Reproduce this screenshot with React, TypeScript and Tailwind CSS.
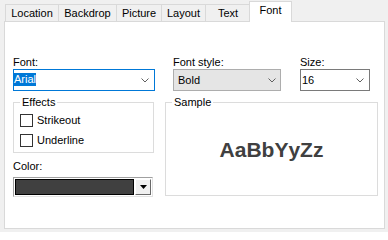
import React from "react";

const tabs = [
  { label: "Location", w: "w-[54px]" },
  { label: "Backdrop", w: "w-[59px]" },
  { label: "Picture", w: "w-[46px]" },
  { label: "Layout", w: "w-[45px]" },
  { label: "Text", w: "w-[46px]" },
];

function Chevron() {
  return (
    <svg width="8" height="5" viewBox="0 0 8 5" className="shrink-0">
      <path d="M0.5 0.5 L4 4 L7.5 0.5" fill="none" stroke="#606060" strokeWidth="1" />
    </svg>
  );
}

function Check({ label }: { label: string }) {
  return (
    <div className="flex items-center h-[13px]">
      <span className="w-[13px] h-[13px] border border-[#333333] bg-white" />
      <span className="ml-[4px] leading-[13px]">{label}</span>
    </div>
  );
}

export default function App() {
  return (
    <div
      className="w-[388px] h-[232px] bg-[#f0f0f0] px-[4px] text-[11px] text-black overflow-hidden"
      style={{ fontFamily: '"Liberation Sans", Arial, sans-serif' }}
    >
      {/* tab strip */}
      <div className="flex items-end h-[21px] pl-[1px]">
        {tabs.map((t, i) => (
          <div
            key={t.label}
            className={`${t.w} h-[17px] border border-b-0 border-[#d9d9d9] bg-[#f0f0f0] flex justify-center pt-[2px] leading-[13px] ${i > 0 ? "-ml-px" : ""}`}
          >
            {t.label}
          </div>
        ))}
        <div className="relative z-10 -ml-[2px] -mb-px w-[43px] h-[21px] border border-b-0 border-[#d9d9d9] bg-white flex justify-center pt-[2px] leading-[13px]">
          Font
        </div>
      </div>

      {/* page */}
      <div className="w-[381px] h-[208px] border border-[#d9d9d9] bg-white pl-[8px] pt-[34px]">
        <div className="flex">
          <div className="w-[142px]">
            <div className="h-[13px] leading-[13px]">Font:</div>
            <div className="h-[22px] border border-[#0078d7] bg-white flex items-center justify-between pr-[5px]">
              <span className="bg-[#0078d7] text-white h-[13px] leading-[13px] -mt-px">Arial</span>
              <Chevron />
            </div>
          </div>
          <div className="w-[108px] ml-[18px]">
            <div className="h-[13px] leading-[13px]">Font style:</div>
            <div className="h-[22px] border border-[#adadad] bg-[#e5e5e5] flex items-center justify-between pl-[4px] pr-[4px]">
              <span className="leading-[13px]">Bold</span>
              <Chevron />
            </div>
          </div>
          <div className="w-[70px] ml-[19px]">
            <div className="h-[13px] leading-[13px]">Size:</div>
            <div className="h-[22px] border border-[#7a7a7a] bg-white flex items-center justify-between pl-[1px] pr-[5px]">
              <span className="leading-[13px]">16</span>
              <Chevron />
            </div>
          </div>
        </div>

        <div className="flex mt-[5px]">
          <div className="w-[141px]">
            <fieldset className="h-[57px] border border-[#dcdcdc] pl-[6px]">
              <legend className="px-[2px] leading-[13px]">Effects</legend>
              <div className="mt-[5px] flex flex-col gap-[7px]">
                <Check label="Strikeout" />
                <Check label="Underline" />
              </div>
            </fieldset>
            <div className="mt-[7px] h-[13px] leading-[13px]">Color:</div>
            <div className="mt-[4px] w-[140px] h-[20px] border border-[#a0a0a0] border-r-[#e3e3e3] border-b-[#e3e3e3] bg-white p-px flex gap-px">
              <div className="flex-1 border border-black bg-[#404040]" />
              <div className="w-[16px] bg-[#f0f0f0] border border-t-white border-l-white border-r-[#696969] border-b-[#696969] flex items-center justify-center">
                <svg width="7" height="4" viewBox="0 0 7 4">
                  <path d="M0 0 H7 L3.5 4 Z" fill="#000" />
                </svg>
              </div>
            </div>
          </div>

          <fieldset className="ml-[11px] w-[213px] h-[100px] border border-[#dcdcdc] pl-[6px]">
            <legend className="px-[2px] leading-[13px]">Sample</legend>
            <div className="h-[86px] -ml-[6px] pb-[6px] flex items-center justify-center">
              <span className="text-[21px] font-bold text-[#404040] leading-none">AaBbYyZz</span>
            </div>
          </fieldset>
        </div>
      </div>
    </div>
  );
}
